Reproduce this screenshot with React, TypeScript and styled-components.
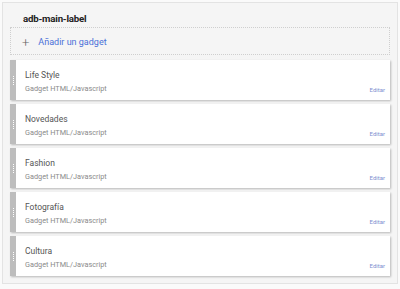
import React from "react";
import styled, { createGlobalStyle } from "styled-components";

const Global = createGlobalStyle`
  html, body { margin: 0; padding: 0; background: #fafafa; }
  body { font-family: Roboto, "Liberation Sans", Arial, sans-serif; }
`;

const Frame = styled.div`
  margin: 2px 2px 0 2px;
  width: 396px;
  height: 282px;
  box-sizing: border-box;
  border: 1px solid #e3e3e3;
  background: #f5f5f5;
  padding: 0 7px 0 7px;
  display: flex;
  flex-direction: column;
`;

const Title = styled.div`
  font-size: 9.7px;
  font-weight: 700;
  color: #222;
  padding: 9px 0 0 13px;
  height: 15px;
  line-height: 13px;
  letter-spacing: -0.2px;
`;

const AddBox = styled.div`
  height: 28px;
  box-sizing: border-box;
  border: 1px dotted #cfcfcf;
  display: flex;
  align-items: center;
  gap: 9px;
  padding: 2px 0 0 11px;
`;

const Plus = styled.span`
  font-size: 13px;
  color: #666;
  font-weight: 300;
  line-height: 1;
`;

const AddLink = styled.span`
  font-size: 9px;
  color: #4a6fd8;
`;

const List = styled.div`
  display: flex;
  flex-direction: column;
  gap: 4px;
  margin-top: 5px;
  width: 380px;
`;

const Card = styled.div`
  height: 40px;
  display: flex;
  background: #fff;
  box-shadow: 1px 1px 2px rgba(0, 0, 0, 0.25);
`;

const Handle = styled.div`
  width: 6px;
  background: #bdbdbd;
  display: flex;
  align-items: center;
  justify-content: center;
`;

const Dots = styled.div`
  width: 1px;
  height: 9px;
  background: repeating-linear-gradient(
    to bottom,
    #fff 0px,
    #fff 1px,
    transparent 1px,
    transparent 2px
  );
`;

const Body = styled.div`
  flex: 1;
  position: relative;
  padding: 9px 0 0 9px;
`;

const Name = styled.div`
  font-size: 8.5px;
  color: #555;
  line-height: 12px;
`;

const Sub = styled.div`
  font-size: 7.3px;
  color: #8a8a8a;
  line-height: 11px;
  margin-top: 2px;
`;

const Edit = styled.span`
  position: absolute;
  right: 5px;
  bottom: 7px;
  font-size: 6px;
  color: #7d8fd0;
`;

const items = ["Life Style", "Novedades", "Fashion", "Fotografía", "Cultura"];

export default function App() {
  return (
    <>
      <Global />
      <Frame>
        <Title>adb-main-label</Title>
        <AddBox>
          <Plus>+</Plus>
          <AddLink>Añadir un gadget</AddLink>
        </AddBox>
        <List>
          {items.map((t) => (
            <Card key={t}>
              <Handle>
                <Dots />
              </Handle>
              <Body>
                <Name>{t}</Name>
                <Sub>Gadget HTML/Javascript</Sub>
                <Edit>Editar</Edit>
              </Body>
            </Card>
          ))}
        </List>
      </Frame>
    </>
  );
}
